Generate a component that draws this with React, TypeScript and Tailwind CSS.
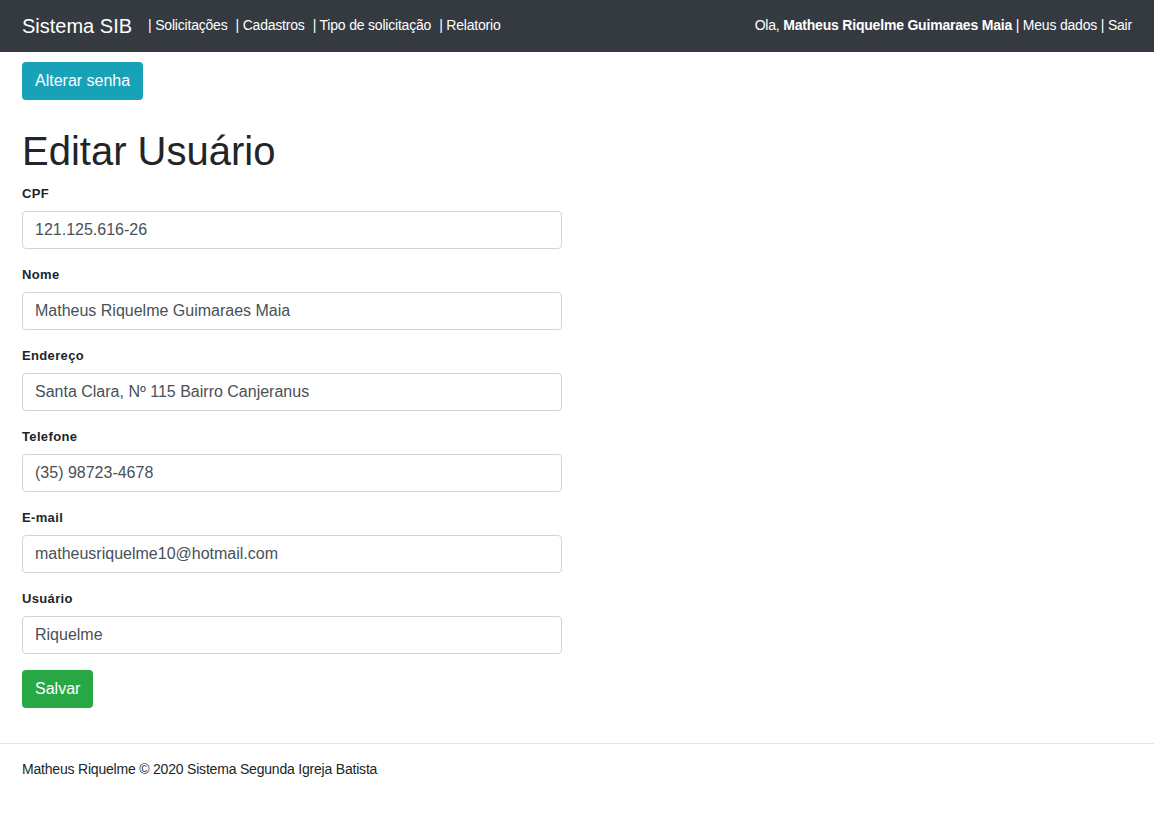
import React from "react";

const fields = [
  { label: "CPF", value: "121.125.616-26" },
  { label: "Nome", value: "Matheus Riquelme Guimaraes Maia" },
  { label: "Endereço", value: "Santa Clara, Nº 115 Bairro Canjeranus" },
  { label: "Telefone", value: "(35) 98723-4678" },
  { label: "E-mail", value: "matheusriquelme10@hotmail.com" },
  { label: "Usuário", value: "Riquelme" },
];

const navLinks = ["Solicitações", "Cadastros", "Tipo de solicitação", "Relatorio"];

function Navbar() {
  return (
    <nav className="flex h-[52px] items-center justify-between bg-[#343a40] px-[22px] text-white">
      <div className="flex items-center">
        <a className="mr-[16px] text-[20px] leading-[30px] pb-[1px]">Sistema SIB</a>
        <div className="flex gap-[8px] text-[14px] leading-[21px] tracking-[-0.2px] pb-[1px]">
          {navLinks.map((link) => (
            <a key={link}>| {link}</a>
          ))}
        </div>
      </div>
      <div className="text-[14px] leading-[21px] tracking-[-0.2px] pb-[1px]">
        Ola, <b className="font-bold">Matheus Riquelme Guimaraes Maia</b> | Meus dados | Sair
      </div>
    </nav>
  );
}

export default function App() {
  return (
    <div
      className="min-h-[818px] bg-white text-[#212529]"
      style={{ fontFamily: '"Liberation Sans", Arial, sans-serif' }}
    >
      <Navbar />

      <main className="px-[22px] pt-[10px]">
        <button className="h-[38px] rounded-[4px] bg-[#17a2b8] px-[13px] text-[16px] leading-[24px] text-white">
          Alterar senha
        </button>

        <h1 className="mt-[27px] mb-[9px] text-[40px] leading-[48px] font-normal">Editar Usuário</h1>

        <form className="w-[540px]">
          {fields.map((field) => (
            <div key={field.label} className="mb-[16px]">
              <label className="mb-[8px] block text-[13px] leading-[19px] tracking-[0.35px] font-bold">
                {field.label}
              </label>
              <input
                readOnly
                value={field.value}
                className="block h-[38px] w-full rounded-[4px] border border-[#ced4da] bg-white px-[12px] text-[16px] text-[#495057] outline-none"
              />
            </div>
          ))}
          <button
            type="button"
            className="h-[38px] rounded-[4px] bg-[#28a745] px-[13px] text-[16px] leading-[24px] text-white"
          >
            Salvar
          </button>
        </form>
      </main>

      <footer className="mt-[35px] border-t border-[#e5e5e5] px-[22px] pt-[15px] text-[14px] leading-[21px] tracking-[-0.2px]">
        Matheus Riquelme © 2020 Sistema Segunda Igreja Batista
      </footer>
    </div>
  );
}
